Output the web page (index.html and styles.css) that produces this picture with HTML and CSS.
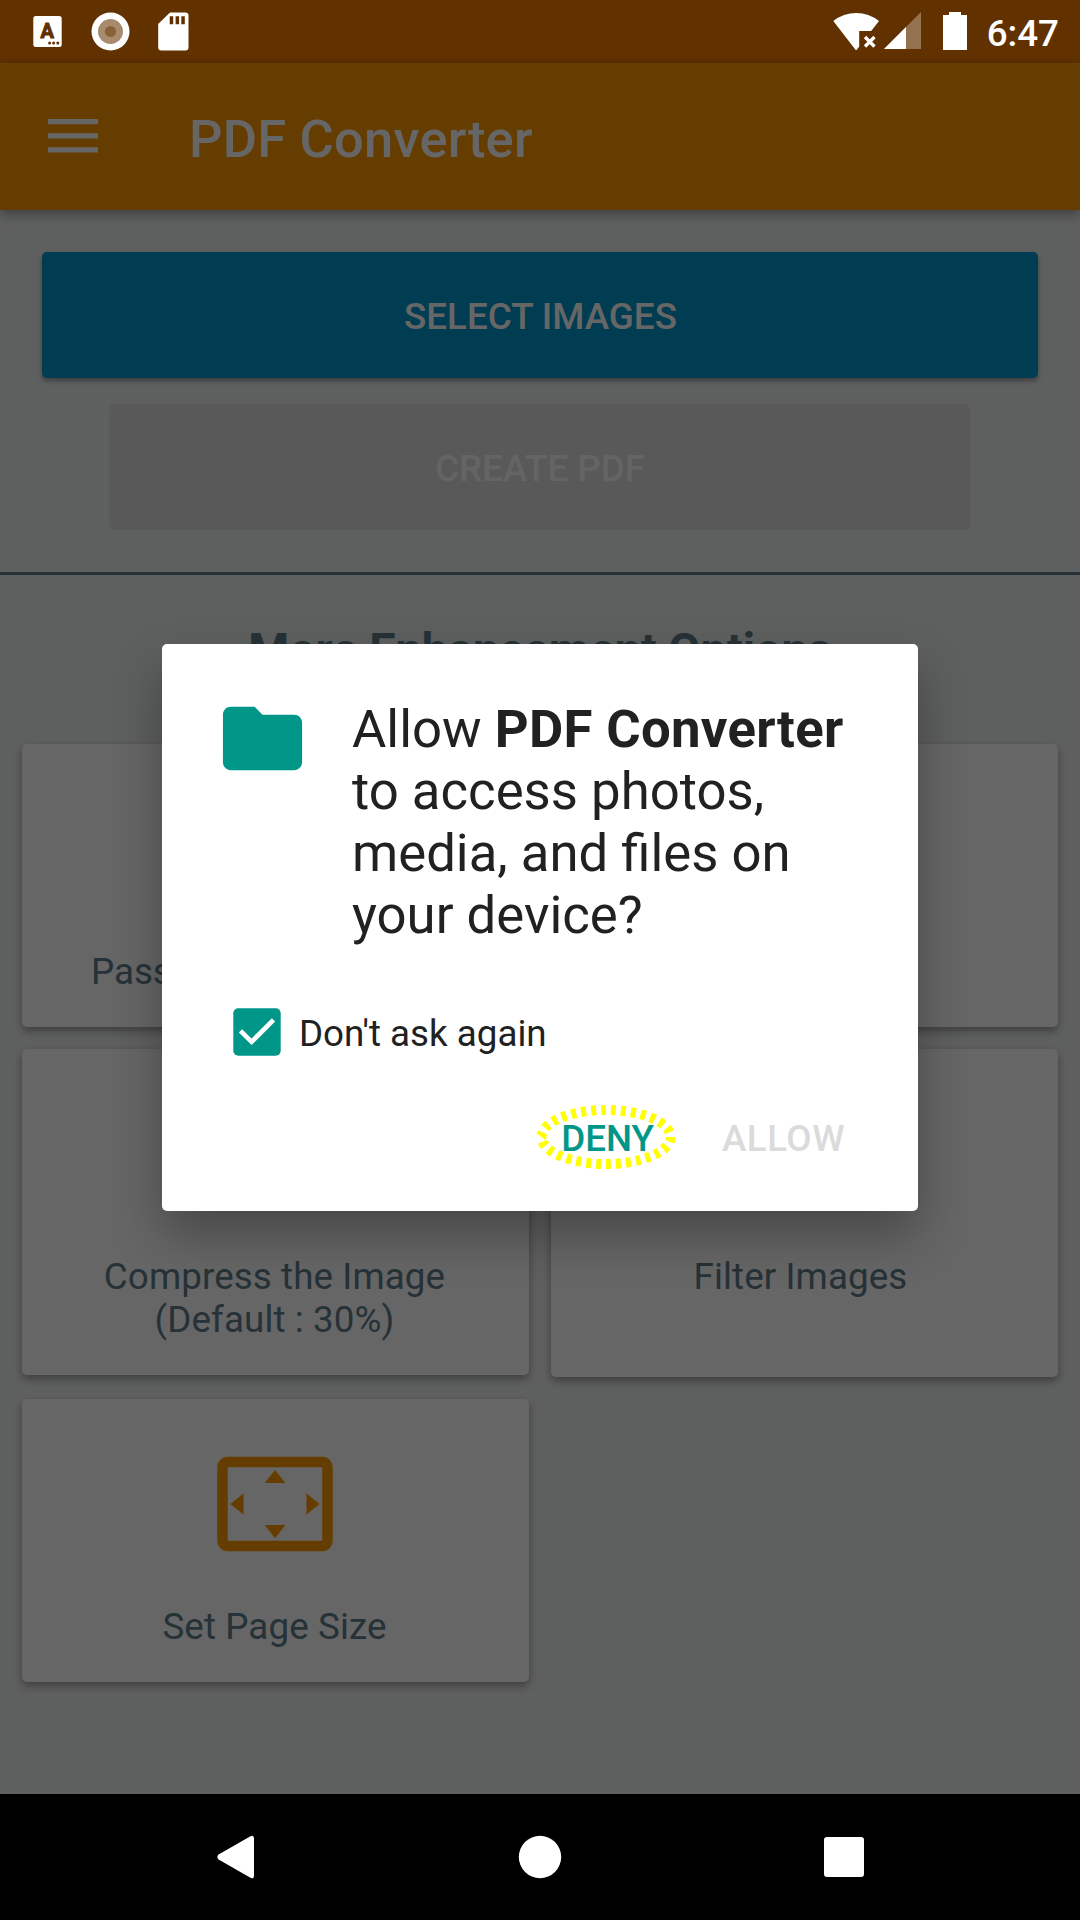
FILE: index.html
```html
<!DOCTYPE html>
<html lang="en">
<head>
<meta charset="utf-8">
<title>PDF Converter</title>
<link rel="stylesheet" href="styles.css">
</head>
<body>
<div class="status-bar">
  <div class="status-icons">
    <svg class="icon-keyboard" width="30" height="40" viewBox="0 0 30 40">
      <rect x="0.3" y="4" width="28.4" height="31" rx="2.5" fill="#fff"/>
      <text class="keyboard-letter" x="14.2" y="26" text-anchor="middle">A</text>
      <circle cx="16.6" cy="31" r="1.5"/><circle cx="20.6" cy="31" r="1.5"/><circle cx="24.8" cy="31" r="1.5"/>
    </svg>
    <svg class="icon-record" width="40" height="40" viewBox="0 0 40 40">
      <circle cx="20.5" cy="19.5" r="19" fill="#fff"/>
      <circle cx="20.5" cy="19.5" r="12.5" fill="#a88b6c"/>
      <circle cx="20.5" cy="19.5" r="5.6" fill="#876239"/>
    </svg>
    <svg class="icon-sd" width="31" height="40" viewBox="0 0 31 40">
      <path fill="#fff" d="M12 .5H27.500q3 0 3 3V35.500q0 3-3 3H3.200q-3 0-3-3V12Z"/>
      <path d="M11.700 4.200h3.500v8h-3.500zM17.600 4.200h3.500v8h-3.500zM23.300 4.200h3.500v8h-3.500z"/>
    </svg>
  </div>
  <div class="status-icons">
    <svg class="icon-wifi" width="47" height="40" viewBox="0 0 47 40">
      <path fill="#fff" d="M.3 9Q10.500 1 23.200 1T46 9L38.200 19H26.200V34.500L24 37.500Q23.200 38.600 22.300 37.500Z"/>
      <path d="M32 25 41.500 34.500M41.500 25 32 34.500" stroke="#fff" stroke-width="3.300" fill="none"/>
    </svg>
    <svg class="icon-signal" width="37" height="40" viewBox="0 0 37 40">
      <path fill="#92724f" d="M0 37 37 0V37Z"/>
      <path fill="#fff" d="M0 37 22 15V37Z"/>
    </svg>
    <svg class="icon-battery" width="24" height="40" viewBox="0 0 24 40">
      <path fill="#fff" d="M6 0H18V3H24V38H0V3H6Z"/>
    </svg>
    <span class="clock">6:47</span>
  </div>
</div>

<header class="app-bar">
  <svg class="menu" width="50" height="34" viewBox="0 0 50 34">
    <path fill="#fff" d="M0 0H50V5.300H0zM0 14.200H50V19.500H0zM0 28.300H50V33.600H0z"/>
  </svg>
  <h1 class="app-title">PDF Converter</h1>
</header>

<main class="content">
  <button class="btn btn-primary">SELECT IMAGES</button>
  <button class="btn btn-disabled">CREATE PDF</button>
  <hr class="divider">
  <h2 class="section-title">More Enhancement Options</h2>
  <div class="cards">
    <div class="card"><div class="card-icon"></div><p class="card-label card-label-wide">Password Protect PDF</p></div>
    <div class="card"></div>
    <div class="card card-short"><div class="card-icon"></div><p class="card-label">Compress the Image<br>(Default : 30%)</p></div>
    <div class="card card-tall"><div class="card-icon"></div><p class="card-label">Filter Images</p></div>
    <div class="card">
      <svg class="card-icon" viewBox="0 0 24 24"><path fill="#ff9800" d="M12.010 5.500L10 8h4l-1.990-2.500zM18 10v4l2.500-1.990L18 10zM6 10l-2.500 2.010L6 14v-4zm8 6h-4l2.010 2.500L14 16zm7-13H3c-1.100 0-2 .9-2 2v14c0 1.100.9 2 2 2h18c1.100 0 2-.9 2-2V5c0-1.100-.9-2-2-2zm0 16.010H3V4.990h18v14.020z"/></svg>
      <p class="card-label">Set Page Size</p>
    </div>
  </div>
</main>

<nav class="nav-bar">
  <svg width="38" height="44" viewBox="0 0 38 44"><path fill="#fff" d="M1.600 19.600 33 1.400Q37 -.5 37 3.500V40.500Q37 44.500 33 42.600L1.600 24.400Q-1 22 1.600 19.600Z"/></svg>
  <svg width="44" height="44" viewBox="0 0 44 44"><circle cx="22" cy="22" r="21.200" fill="#fff"/></svg>
  <svg width="40" height="40" viewBox="0 0 40 40"><rect width="40" height="40" rx="3" fill="#fff"/></svg>
</nav>

<div class="scrim">
  <section class="dialog">
    <div class="message">
      <svg class="folder" width="96" height="95" viewBox="0 0 24 24" preserveAspectRatio="xMinYMin"><path fill="#009688" d="M10 4H4c-1.100 0-1.990.9-1.990 2L2 18c0 1.100.9 2 2 2h16c1.100 0 2-.9 2-2V8c0-1.100-.9-2-2-2h-8l-2-2z"/></svg>
      <p class="question">Allow <b>PDF Converter</b><br>to access photos,<br>media, and files on<br>your device?</p>
    </div>
    <label class="remember">
      <svg width="48" height="48" viewBox="0 0 48 48"><rect x=".3" y=".3" width="47.400" height="47.400" rx="5" fill="#009688"/><path d="M7.500 22.800 18.600 33.800 40.500 11.800" fill="none" stroke="#fff" stroke-width="4.700"/></svg>
      <span>Don't ask again</span>
    </label>
    <div class="actions">
      <span class="action action-deny">DENY
        <svg class="highlight" width="140" height="66" viewBox="0 0 140 66"><ellipse cx="70" cy="33" rx="64.500" ry="27" pathLength="300" fill="none" stroke="#ff0" stroke-width="10" stroke-dasharray="5 5"/></svg>
      </span>
      <span class="action action-allow">ALLOW</span>
    </div>
  </section>
</div>
</body>
</html>
```
FILE: styles.css
```css
* { box-sizing: border-box; }

body {
  margin: 0;
  width: 1080px;
  height: 1920px;
  display: flex;
  flex-direction: column;
  overflow: hidden;
  background: #ebefed;
  font-family: Roboto, sans-serif;
  font-size: 36.75px;
}

svg { display: block; flex: none; }
h1, h2, p { margin: 0; }

.status-bar {
  flex: none;
  height: 63px;
  padding: 12px 21px 11px 33px;
  display: flex;
  justify-content: space-between;
  background: #f57c00;
}

/* System icons stay bright above the scrim */
.status-icons {
  position: relative;
  z-index: 3;
  display: flex;
  fill: #613000;
}

.keyboard-letter {
  font-size: 20px;
  font-weight: 700;
  stroke: #613000;
  stroke-width: 1px;
}

.icon-record { margin-left: 27px; }
.icon-sd { margin-left: 28px; }
.icon-signal { margin-left: 4px; }
.icon-battery { margin-left: 22px; }

.clock {
  margin-left: 20px;
  padding-top: 2px;
  line-height: 40px;
  font-weight: 500;
  color: #fff;
}

.app-bar {
  flex: none;
  height: 147px;
  padding: 0 48px;
  display: flex;
  align-items: center;
  gap: 91px;
  background: #ff9800;
  box-shadow: 0 3px 12px rgba(0, 0, 0, .4);
}

.menu { margin-bottom: 2px; }

.app-title {
  padding-top: 4px;
  font-size: 52.5px;
  font-weight: 500;
  line-height: 62px;
  letter-spacing: .22px;
  color: #fff;
}

.content {
  flex: 1;
  display: flex;
  flex-direction: column;
  padding-top: 42px;
}

.btn {
  flex: none;
  height: 126px;
  padding: 2px 0 0 1px;
  border: 0;
  border-radius: 5px;
  font: 500 36.75px/43px Roboto, sans-serif;
  color: #fff;
}

.btn-primary {
  margin: 0 42px;
  background: #0099cc;
  box-shadow: 0 3px 5px rgba(0, 0, 0, .35);
}

.btn-disabled {
  margin: 26px 110px 0 109px;
  background: #dedede;
  color: #f9f9f9;
}

.divider {
  width: 100%;
  height: 3px;
  margin: 42px 0 0;
  border: 0;
  background: #607d8b;
}

.section-title {
  margin-top: 44px;
  height: 125px;
  font-size: 46.8px;
  line-height: 62px;
  font-weight: 700;
  text-align: center;
  color: #607d8b;
}

.cards {
  display: grid;
  grid-template-columns: 1fr 1fr;
  gap: 22px;
  padding: 0 22px;
}

.card {
  min-height: 283px;
  padding: 42px 20px 34px 18px;
  display: flex;
  flex-direction: column;
  align-items: center;
  gap: 38px;
  border-radius: 5px;
  background: #fff;
  box-shadow: 0 4px 8px rgba(0, 0, 0, .35);
}

.card-short { align-self: start; }
.card-tall { min-height: 328px; padding-right: 26px; }
.card-icon { width: 126px; height: 126px; flex: none; }

.card-label {
  line-height: 43px;
  letter-spacing: .1px;
  text-align: center;
  color: #607d8b;
}

.card-label-wide { letter-spacing: 0; }

.nav-bar {
  flex: none;
  height: 126px;
  padding: 0 216px 0 217px;
  display: flex;
  align-items: center;
  justify-content: space-between;
  background: #000;
}

.scrim {
  position: absolute;
  inset: 0 0 126px;
  z-index: 2;
  padding: 644px 162px 0;
  background: rgba(0, 0, 0, .6);
}

.dialog {
  height: 567px;
  padding: 54px 63px 0 53px;
  display: flex;
  flex-direction: column;
  border-radius: 5px;
  background: #fff;
  color: #212121;
  box-shadow: 0 24px 50px rgba(0, 0, 0, .3);
}

.message {
  display: flex;
  gap: 41px;
}

.folder { margin-top: -7px; }

/* Regular text keeps its "fi" ligature: letter-spacing would break it apart */
.question {
  font-size: 52.7px;
  line-height: 62px;
  white-space: nowrap;
}

.question b { letter-spacing: .3px; }

.remember {
  margin: 62px 0 0 18px;
  display: flex;
  gap: 18px;
  line-height: 51px;
  height: 48px;
}

.actions {
  margin-top: 58px;
  display: flex;
  justify-content: flex-end;
  gap: 68px;
  line-height: 49px;
  font-weight: 500;
}

.action { position: relative; }
.action-deny { color: #009688; }
.action-allow { color: #dbdbdb; margin-right: 10px; letter-spacing: .5px; }

/* Dashed ring drawn over the Deny action */
.highlight {
  position: absolute;
  left: -25px;
  top: -10px;
}
```
